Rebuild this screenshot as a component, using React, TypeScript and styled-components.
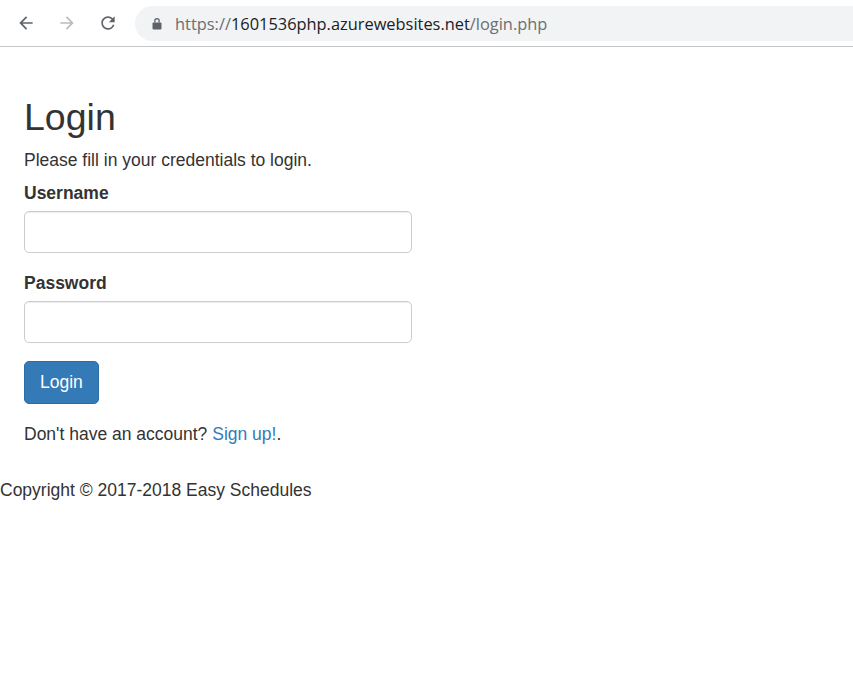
import React from 'react';
import styled, { createGlobalStyle } from 'styled-components';

const GlobalStyle = createGlobalStyle`
  html, body {
    margin: 0;
    padding: 0;
    background: #fff;
  }
  body {
    font-family: "Liberation Sans", Arial, sans-serif;
    font-size: 17.5px;
    line-height: 25px;
    color: #333;
  }
  * {
    box-sizing: border-box;
  }
`;

const BackIcon = () => (
  <svg width="20" height="20" viewBox="0 0 24 24" fill="currentColor">
    <path d="M20 11H7.83l5.59-5.59L12 4l-8 8 8 8 1.41-1.41L7.83 13H20v-2z" />
  </svg>
);

const ForwardIcon = () => (
  <svg width="20" height="20" viewBox="0 0 24 24" fill="currentColor">
    <path d="M4 11h12.17l-5.59-5.59L12 4l8 8-8 8-1.41-1.41L16.17 13H4v-2z" />
  </svg>
);

const ReloadIcon = () => (
  <svg width="20" height="20" viewBox="0 0 24 24" fill="currentColor">
    <path d="M17.65 6.35A7.958 7.958 0 0012 4c-4.42 0-7.99 3.58-7.99 8s3.57 8 7.99 8c3.73 0 6.84-2.55 7.73-6h-2.08A5.99 5.99 0 0112 18c-3.31 0-6-2.69-6-6s2.69-6 6-6c1.66 0 3.14.69 4.22 1.78L13 11h7V4l-2.35 2.35z" />
  </svg>
);

const LockIcon = () => (
  <svg width="10" height="13" viewBox="0 0 10 13" fill="#5f6368">
    <path d="M2.2 5.5V3.8a2.8 2.8 0 015.6 0v1.7h-1.3V3.8a1.5 1.5 0 00-3 0v1.7z" />
    <rect x="0.5" y="5.5" width="9" height="7" rx="1" />
  </svg>
);

const App = () => {
  return (
    <>
      <GlobalStyle />
      <Toolbar>
        <NavButton>
          <BackIcon />
        </NavButton>
        <NavButton disabled>
          <ForwardIcon />
        </NavButton>
        <NavButton last>
          <ReloadIcon />
        </NavButton>
        <Omnibox>
          <LockIcon />
          <Url>
            <UrlPart>https://</UrlPart>
            <UrlHost>1601536php.azurewebsites.net</UrlHost>
            <UrlPart>/login.php</UrlPart>
          </Url>
        </Omnibox>
      </Toolbar>

      <Wrapper>
        <Title>Login</Title>
        <Intro>Please fill in your credentials to login.</Intro>
        <form>
          <FormGroup>
            <Label>Username</Label>
            <Input type="text" />
          </FormGroup>
          <FormGroup>
            <Label>Password</Label>
            <Input type="password" />
          </FormGroup>
          <FormGroup>
            <SubmitButton type="button">Login</SubmitButton>
          </FormGroup>
          <Note>
            Don't have an account? <Link href="#">Sign up!</Link>.
          </Note>
        </form>
      </Wrapper>
      <Footer>Copyright © 2017-2018 Easy Schedules</Footer>
    </>
  );
};

export default App;

const Toolbar = styled.header`
  display: flex;
  align-items: center;
  height: 47px;
  padding-left: 16px;
  border-bottom: 1px solid #c6c6c6;
  background: #fff;
  overflow: hidden;
`;

const NavButton = styled.div<{ disabled?: boolean; last?: boolean }>`
  display: flex;
  align-items: center;
  justify-content: center;
  width: 20px;
  height: 20px;
  margin-right: ${({ last }) => (last ? '17px' : '21px')};
  color: ${({ disabled }) => (disabled ? '#babcbe' : '#5f6368')};
`;

const Omnibox = styled.div`
  display: flex;
  align-items: center;
  flex: 1;
  height: 35px;
  margin-right: -40px;
  padding-left: 17px;
  border-radius: 18px;
  background: #f1f3f4;
`;

const Url = styled.div`
  margin-left: 13px;
  font-family: "Open Sans", "Noto Sans", sans-serif;
  font-size: 16.4px;
  white-space: nowrap;
`;

const UrlPart = styled.span`
  color: #6b6e72;
`;

const UrlHost = styled.span`
  color: #202124;
`;

const Wrapper = styled.div`
  width: 437px;
  padding: 25px 25px 25px 24px;
`;

const Title = styled.h2`
  margin: 25px 0 10px;
  font-size: 37.5px;
  font-weight: 500;
  line-height: 41.25px;
`;

const Intro = styled.p`
  margin: 0 0 8px;
`;

const FormGroup = styled.div`
  margin-bottom: 18px;
`;

const Label = styled.label`
  display: inline-block;
  margin-bottom: 4.5px;
  font-weight: 700;
`;

const Input = styled.input`
  display: block;
  width: 388px;
  height: 42.5px;
  padding: 7.5px 15px;
  border: 1px solid #ccc;
  border-radius: 5px;
  box-shadow: inset 0 1px 1px rgba(0, 0, 0, 0.075);
  font-family: inherit;
  font-size: 17.5px;
  color: #555;
  outline: none;
`;

const SubmitButton = styled.button`
  display: inline-block;
  height: 42.5px;
  padding: 7.5px 15px;
  border: 1px solid #2e6da4;
  border-radius: 5px;
  background: #337ab7;
  color: #fff;
  font-family: inherit;
  font-size: 17.5px;
  line-height: 25px;
  cursor: pointer;
`;

const Note = styled.p`
  margin: 0;
`;

const Link = styled.a`
  color: #337ab7;
  text-decoration: none;
`;

const Footer = styled.footer`
  margin-top: 6px;
`;
